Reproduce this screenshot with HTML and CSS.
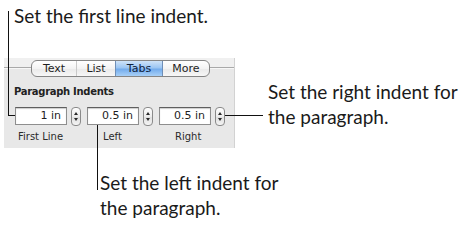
FILE: index.html
```html
<!DOCTYPE html>
<html lang="en">
<head>
  <meta charset="UTF-8">
  <title>Paragraph Indents</title>
  <link rel="stylesheet" href="styles.css">
</head>
<body>
  <div class="figure">
    <p class="callout top-callout">Set the first line indent.</p>

    <div class="middle">
      <div class="panel">
        <div class="tab-bar">
          <div class="tabs">
            <span class="tab tab-text">Text</span>
            <span class="tab tab-list">List</span>
            <span class="tab tab-tabs selected">Tabs</span>
            <span class="tab tab-more">More</span>
          </div>
        </div>
        <div class="section-title">Paragraph Indents</div>
        <div class="fields">
          <div class="field">
            <div class="control">
              <span class="input">1 in</span>
              <span class="stepper"><i class="up"></i><i class="down"></i></span>
            </div>
            <span class="label first">First Line</span>
          </div>
          <div class="field">
            <div class="control">
              <span class="input">0.5 in</span>
              <span class="stepper"><i class="up"></i><i class="down"></i></span>
            </div>
            <span class="label">Left</span>
          </div>
          <div class="field">
            <div class="control">
              <span class="input">0.5 in</span>
              <span class="stepper"><i class="up"></i><i class="down"></i></span>
            </div>
            <span class="label">Right</span>
          </div>
        </div>
      </div>
      <p class="callout right-callout">Set the right indent for<br>the paragraph.</p>
    </div>

    <p class="callout bottom-callout">Set the left indent for<br>the paragraph.</p>

    <!-- leader lines -->
    <span class="leader first-v"></span>
    <span class="leader first-h"></span>
    <span class="leader right-h"></span>
    <span class="leader left-v"></span>
  </div>
</body>
</html>
```

FILE: styles.css
```css
body {
  margin: 0;
  background: #fff;
  color: #1a1a1a;
}

.figure {
  position: relative;
  width: 467px;
  height: 226px;
  overflow: hidden;
}

.callout {
  margin: 0;
  font-family: Lato, "Open Sans", sans-serif;
  font-size: 19px;
  line-height: 25px;
  color: #1a1a1a;
}

.top-callout {
  padding: 3px 0 0 14px;
  height: 25px;
}

.middle {
  display: flex;
  align-items: flex-start;
  margin-top: 30px;
}

.right-callout {
  margin: 21px 0 0 33px;
  white-space: nowrap;
}

.bottom-callout {
  margin: 22px 0 0 100px;
}

/* panel */
.panel {
  width: 231px;
  height: 90px;
  margin-left: 4px;
  background: #e8e8e8;
  border-right: 1px solid #d2d2d2;
  box-sizing: border-box;
  font-family: "DejaVu Sans", sans-serif;
  color: #1e1e1e;
}

.tab-bar {
  height: 19px;
  padding: 2px 0 0 27px;
  box-sizing: border-box;
  background: linear-gradient(#f0f0f0 0, #f0f0f0 9px, #a9a9a9 9px, #a9a9a9 10px, #f7f7f7 10px, #f7f7f7 11px, #e8e8e8 11px);
  display: flex;
}

.tabs {
  display: flex;
  height: 17px;
  border: 1px solid #858585;
  border-radius: 6px;
  background: linear-gradient(#ffffff, #f3f3f3 50%, #e9e9e9 51%, #f7f7f7);
  overflow: hidden;
  box-sizing: border-box;
}

.tab {
  font-size: 11px;
  line-height: 15px;
  text-align: center;
  box-sizing: border-box;
  border-left: 1px solid #c9c9c9;
}

.tab-text {
  width: 44px;
  border-left: none;
}

.tab-list {
  width: 39px;
}

.tab-tabs {
  width: 47px;
}

.tab-more {
  width: 47px;
}

.tab.selected {
  background: linear-gradient(#cfe3f8, #9cc6f3 45%, #74acec 55%, #a8d0f7);
  border-left-color: #6f8fb8;
  color: #10223c;
}

.tab.selected + .tab {
  border-left-color: #6f8fb8;
}

.section-title {
  font-size: 10px;
  font-weight: bold;
  letter-spacing: -0.3px;
  line-height: 12px;
  margin: 9px 0 0 10px;
  color: #222;
}

.fields {
  display: flex;
  gap: 6px;
  margin: 9px 0 0 11px;
}

.field {
  display: flex;
  flex-direction: column;
}

.control {
  display: flex;
  align-items: flex-start;
  gap: 4px;
}

.input {
  width: 52px;
  height: 18px;
  box-sizing: border-box;
  border: 1px solid #8e8e8e;
  border-top-color: #5f5f5f;
  background: #fff;
  box-shadow: inset 0 1px 1px #cdcdcd;
  font-size: 11px;
  line-height: 16px;
  text-align: right;
  padding-right: 5px;
}

.stepper {
  position: relative;
  width: 10px;
  height: 19px;
  box-sizing: border-box;
  border: 1px solid #8a8a8a;
  border-radius: 4px;
  background: linear-gradient(#fefefe, #ececec 50%, #dedede 51%, #f4f4f4);
}

.stepper i {
  position: absolute;
  left: 2px;
  width: 0;
  height: 0;
  border-left: 2px solid transparent;
  border-right: 2px solid transparent;
}

.stepper .up {
  top: 4px;
  border-bottom: 3px solid #2a2a2a;
}

.stepper .down {
  bottom: 4px;
  border-top: 3px solid #2a2a2a;
}

.label {
  font-size: 10px;
  line-height: 12px;
  margin-top: 5px;
  padding-left: 16px;
  color: #2a2a2a;
}

.label.first {
  padding-left: 3px;
}

/* leader lines */
.leader {
  position: absolute;
  background: #111;
}

.first-v {
  left: 8px;
  top: 11px;
  width: 1px;
  height: 105px;
}

.first-h {
  left: 8px;
  top: 115px;
  width: 7px;
  height: 1px;
}

.right-h {
  left: 225px;
  top: 115px;
  width: 38px;
  height: 1px;
}

.left-v {
  left: 97px;
  top: 125px;
  width: 1px;
  height: 65px;
}
```
